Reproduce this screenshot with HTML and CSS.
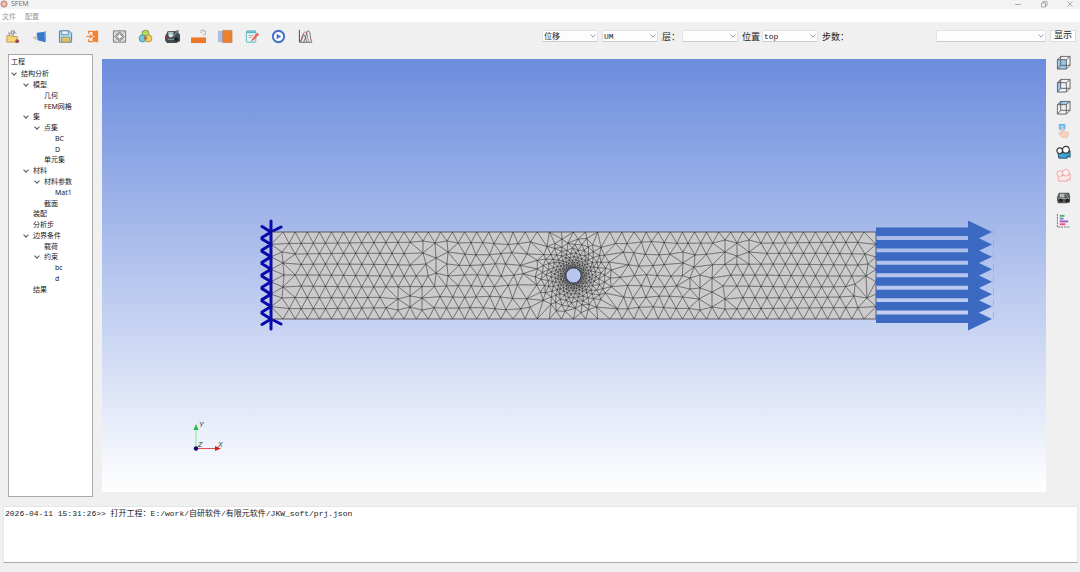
FILE: index.html
```html
<!DOCTYPE html>
<html lang="zh-CN">
<head>
<meta charset="UTF-8">
<title>SFEM</title>
<link rel="stylesheet" href="styles.css">
</head>
<body>
<header class="titlebar">
	<svg class="logo" viewBox="0 0 10 10"><circle cx="5" cy="5" r="4" fill="#f8c9ae" stroke="#9a86c8"/><path d="M2 4L5 2L8 4L7 8H3Z" fill="none" stroke="#ee7b4a"/></svg>
	<span class="apptitle">SFEM</span>
	<div class="winbuttons">
		<button aria-label="最小化"><svg viewBox="0 0 8 8"><path d="M1 4.500H7" stroke="#999" stroke-width=".8"/></svg></button>
		<button aria-label="还原"><svg viewBox="0 0 8 8"><path d="M1.500 3H5.500V7H1.500ZM3 3V1.500H7V5.500H5.500" fill="none" stroke="#999" stroke-width=".8"/></svg></button>
		<button aria-label="关闭"><svg viewBox="0 0 8 8"><path d="M1.500 1.500L6.500 6.500M6.500 1.500L1.500 6.500" stroke="#999" stroke-width=".8"/></svg></button>
	</div>
</header>
<nav class="menubar">
	<button>文件</button>
	<button>配置</button>
</nav>
<div class="toolbar">
	<div class="tools">
		<button aria-label="新建"><svg viewBox="0 0 16 16"><path d="M2 7H6L7 8H13V14H2Z" fill="#f8d477" stroke="#b88b3c" stroke-width=".8"/><path d="M5 7L4 4L7 5L7 2L10 2L9 7M7 7L10 3L12 5" fill="none" stroke="#858a9b"/><circle cx="13" cy="13" r="2" fill="#9b4650"/></svg></button>
		<button aria-label="打开"><svg viewBox="0 0 16 16"><path d="M5 4L14 3V14L6 12Z" fill="#3978cb"/><path d="M0 9L5 7V12Z" fill="#c9c3b6"/><path d="M13 3L15 2V13L14 14" fill="#75a4df"/></svg></button>
		<button aria-label="保存"><svg viewBox="0 0 16 16"><path d="M1.500 2H12L14.500 4.500V14H1.500Z" fill="#a9d7ef" stroke="#557e9f"/><path d="M4 2H11V6H4Z" fill="#e7f0f4" stroke="#557e9f" stroke-width=".8"/><path d="M4 9H12.500V14H4Z" fill="#f4d36c" stroke="#8b8550" stroke-width=".8"/><path d="M5 11H11M5 12.500H11" stroke="#b59a4c" stroke-width=".6"/></svg></button>
		<button aria-label="退出"><svg viewBox="0 0 16 16"><path d="M8 3L14 1.500V14.500L8 13Z" fill="#f08233"/><path d="M4 5V2.500H13M4 11V13.500H9M1 8H7M5 6L7 8L5 10" fill="none" stroke="#f08233" stroke-width="1.300"/><circle cx="9.500" cy="8" r=".7" fill="#fff"/></svg></button>
		<button aria-label="网格"><svg viewBox="0 0 16 16"><path d="M1.500 2H14.500V14H1.500Z" fill="#e5e5e5" stroke="#777"/><path d="M1.500 2L14.500 14M14.500 2L1.500 14" stroke="#999" stroke-width=".7"/><path d="M8 3L13 8L8 13L3 8Z" fill="#ddd" stroke="#666"/><path d="M8 5L11 8L8 11L5 8Z" fill="#fff" stroke="#666"/></svg></button>
		<button aria-label="材料"><svg viewBox="0 0 16 16"><circle cx="8" cy="5" r="3.800" fill="#b8da54" stroke="#799a48"/><circle cx="5" cy="10" r="3.800" fill="#69c5dc" fill-opacity=".9" stroke="#4994a8"/><circle cx="11" cy="10" r="3.800" fill="#f7c957" fill-opacity=".9" stroke="#b98f3b"/><path d="M8 7L10 10L8 12L6 10Z" fill="#a96b40"/></svg></button>
		<button aria-label="装配"><svg viewBox="0 0 16 16"><path d="M0 8L3 2H13L16 6V13L12 15H2L0 12Z" fill="#424c50"/><path d="M3 3H9V8H4Z" fill="#adbdc5"/><path d="M10 2L15 1L13 6" fill="#64757e"/><circle cx="6" cy="7" r="2" fill="#dae7e9"/><path d="M9 8L12 4M3 11H12" stroke="#80a5aa"/><path d="M0 9H2" stroke="#e02626" stroke-width="2"/><circle cx="12" cy="11" r="2" fill="#171f24"/></svg></button>
		<button aria-label="载荷"><svg viewBox="0 0 16 16"><path d="M0 9H16V15H0Z" fill="#ec792b"/><path d="M10 2L12 1L13 3M13 1L16 3L15 6L13 7M10 3L12 5" fill="none" stroke="#999" stroke-width=".8"/></svg></button>
		<button aria-label="边界"><svg viewBox="0 0 16 16"><path d="M0 2H6V14H0Z" fill="#a9bee7"/><path d="M5 1.500H15V14.500H5Z" fill="#eb802f" stroke="#bc7a4e" stroke-width=".6"/></svg></button>
		<button aria-label="编辑"><svg viewBox="0 0 16 16"><rect x="1.500" y="2" width="10" height="12" rx="1.500" fill="#e8f7f9" stroke="#6dc1cd" stroke-width="1.200"/><path d="M2 2.500H11V4.500H2Z" fill="#57b8c5"/><path d="M4 7H9M4 9H7" stroke="#e48c88"/><path d="M7 11.500L13 4L15 5.500L9 12L6.500 13Z" fill="#ee5a55"/></svg></button>
		<button aria-label="计算"><svg viewBox="0 0 16 16"><circle cx="8" cy="8" r="6" fill="#fff" stroke="#4674c8" stroke-width="2.200"/><path d="M6 5L11 8L6 11Z" fill="#4674c8"/></svg></button>
		<button aria-label="曲线"><svg viewBox="0 0 16 16"><path d="M1.500 1V14H15" fill="none" stroke="#444"/><path d="M3 13C6 10 5 3 8 3S9 11 12 13" fill="none" stroke="#ae5147" stroke-width=".8"/><path d="M6 13C9 11 8 2 11 2S12 11 15 13M2 13C5 11 4 5 6 6S8 10 9 13" fill="none" stroke="#444" stroke-width=".8"/></svg></button>
	</div>
	<div class="filters">
		<span class="combo"><select aria-label="结果类型"><option>位移</option></select><svg viewBox="0 0 6 4"><path d="M.5.5L3 3L5.500.5"/></svg></span>
		<span class="combo"><select aria-label="分量"><option>UM</option></select><svg viewBox="0 0 6 4"><path d="M.5.5L3 3L5.500.5"/></svg></span>
		<label class="layer" for="layer">层：</label>
		<span class="combo"><select id="layer"><option></option></select><svg viewBox="0 0 6 4"><path d="M.5.5L3 3L5.500.5"/></svg></span>
		<label class="place" for="place">位置</label>
		<span class="combo"><select id="place"><option>top</option></select><svg viewBox="0 0 6 4"><path d="M.5.5L3 3L5.500.5"/></svg></span>
		<label class="steps" for="steps">步数：</label>
		<span class="combo wide"><select id="steps"><option></option></select><svg viewBox="0 0 6 4"><path d="M.5.5L3 3L5.500.5"/></svg></span>
		<button class="show">显示</button>
	</div>
</div>
<main class="work">
	<aside class="project">
		<h1>工程</h1>
		<ul class="tree">
			<li class="open">结构分析</li>
			<li class="open l1">模型</li>
			<li class="l2">几何</li>
			<li class="l2">FEM网格</li>
			<li class="open l1">集</li>
			<li class="open l2">点集</li>
			<li class="l3">BC</li>
			<li class="l3">D</li>
			<li class="l2">单元集</li>
			<li class="open l1">材料</li>
			<li class="open l2">材料参数</li>
			<li class="l3">Mat1</li>
			<li class="l2">截面</li>
			<li class="l1">装配</li>
			<li class="l1">分析步</li>
			<li class="open l1">边界条件</li>
			<li class="l2">载荷</li>
			<li class="open l2">约束</li>
			<li class="l3">bc</li>
			<li class="l3">d</li>
			<li class="l1">结果</li>
		</ul>
	</aside>
	<section class="view">
		<svg class="scene" viewBox="102 59 944 433">
			<path id="supports" class="supports"/>
			<rect class="plate" x="271" y="232" width="605" height="87"/>
			<path id="mesh" class="mesh"/>
			<circle class="hole" cx="573.500" cy="275.500" r="7.500"/>
			<path class="axisline" d="M271 221V329"/>
			<g id="loads" class="loads"></g>
			<path d="M993.500 228V324" stroke="#8e9fd8" stroke-width=".6" stroke-dasharray="7 5"/>
			<path d="M196 448V428" stroke="#7bea8c"/>
			<path d="M193.500 430L196 424L198.500 430Z" fill="#27b84a"/>
			<path d="M196 448.500H216" stroke="#e25252"/>
			<path d="M215 446L221 448.500L215 451Z" fill="#d61f1f"/>
			<circle cx="196" cy="448.500" r="2.200" fill="#0b0b72"/>
			<text x="199" y="427">Y</text>
			<text x="198" y="447">Z</text>
			<text x="218" y="447">X</text>
		</svg>
	</section>
	<div class="views">
		<button aria-label="正视图"><svg viewBox="0 0 16 16"><path d="M1.500 5H11V15H1.500Z" fill="#9ac9ee"/><path class="cube" d="M1.500 5H11V15H1.500ZM1.500 5L5 1.500H15V11L11 15M11 5L15 1.500M5 1.500V11H15M5 11L1.500 15"/></svg></button>
		<button aria-label="侧视图"><svg viewBox="0 0 16 16"><path d="M1.500 5L5 1.500V11L1.500 15Z" fill="#9ac3ee"/><path class="cube" d="M1.500 5H11V15H1.500ZM1.500 5L5 1.500H15V11L11 15M11 5L15 1.500M5 1.500V11H15M5 11L1.500 15"/></svg></button>
		<button aria-label="俯视图"><svg viewBox="0 0 16 16"><path d="M1.500 5L5 1.500H15L11 5Z" fill="#9ac3ee"/><path class="cube" d="M1.500 5H11V15H1.500ZM1.500 5L5 1.500H15V11L11 15M11 5L15 1.500M5 1.500V11H15M5 11L1.500 15"/></svg></button>
		<button aria-label="拾取"><svg viewBox="0 0 16 16"><path d="M3 1H10V7H3Z" fill="#64b9ed"/><path d="M5 4H8" stroke="#fff"/><path d="M6 5Q7 4 8 5V9L13 10V13L11 16H7L3 11Q3 9 6 11Z" fill="#fbd6bd" stroke="#d9a99a" stroke-width=".7"/></svg></button>
		<button aria-label="显示全部"><svg viewBox="0 0 16 16"><path d="M2 8H12L15 6V13L12 12V14H3Z" fill="#3ba5d5" stroke="#254b5b"/><circle cx="4" cy="6" r="3" fill="#fff" stroke="#333" stroke-width="1.200"/><circle cx="10.500" cy="5" r="3.600" fill="#fff" stroke="#333" stroke-width="1.200"/></svg></button>
		<button aria-label="隐藏"><svg viewBox="0 0 16 16"><path d="M2 8H12L15 6V13L12 12V14H3Z" fill="#fbe9e9" stroke="#f2a3a6"/><circle cx="4" cy="6" r="3" fill="#fbeeee" stroke="#f2a3a6"/><circle cx="10.500" cy="5" r="3.600" fill="#fbeeee" stroke="#f2a3a6"/></svg></button>
		<button aria-label="部件"><svg viewBox="0 0 16 16"><path d="M1 8L3 3H14L15 7V13L12 14H2L1 11Z" fill="#555b5b"/><path d="M4 4H9V8H4Z" fill="#b8b8b8"/><path d="M2 9H14M10 4L13 8" stroke="#aaa"/><circle cx="5" cy="11" r="2" fill="#222"/><circle cx="12" cy="11" r="2" fill="#222"/></svg></button>
		<button aria-label="图例"><svg viewBox="0 0 16 16"><path d="M1.500 1V15H15" fill="none" stroke="#666" stroke-dasharray="2 1"/><path d="M4 3H9" stroke="#56ac69" stroke-width="2"/><path d="M4 6H8" stroke="#5c88cf" stroke-width="2"/><path d="M4 9H13" stroke="#a15bc2" stroke-width="2"/><path d="M4 12H10" stroke="#ef5379" stroke-width="2"/></svg></button>
	</div>
</main>
<footer class="log">2026-04-11 15:31:26&gt;&gt; 打开工程：E:/work/自研软件/有限元软件/JKW_soft/prj.json</footer>
<script src="mesh.js"></script>
</body>
</html>
```
FILE: styles.css
```css
* {
	margin:0;
	padding:0;
	box-sizing:border-box;
	}
body{
	display:flex;
	flex-direction:column;
	height:100vh;
	overflow:hidden;
	padding-bottom:9px;
	background-color:#f0f0f0;
	color:#222;
	font-family:"Noto Sans","Noto Sans CJK SC",sans-serif;
	font-size:7px;
	}
button{
	border:none;
	background:none;
	font:inherit;
	color:inherit;
	}
svg{
	display:block;
	}
.titlebar{
	display:flex;
	align-items:center;
	height:9px;
	padding-bottom:2px;
	background-color:#f3f3f3;
	color:#777;
	}
.logo{
	width:8px;
	height:8px;
	}
.apptitle{
	margin-left:3px;
	line-height:8px;
	}
.winbuttons{
	display:flex;
	gap:18px;
	margin-left:auto;
	padding-right:6px;
	}
.winbuttons svg{
	width:8px;
	height:8px;
	}
.menubar{
	display:flex;
	gap:9px;
	height:13px;
	padding-left:2px;
	background-color:#fff;
	color:#999;
	}
.toolbar{
	display:flex;
	justify-content:space-between;
	align-items:center;
	height:28px;
	padding:0 4px 0 5px;
	}
.tools{
	display:flex;
	justify-content:space-between;
	width:308px;
	}
.tools svg{
	width:15px;
	height:15px;
	}
.filters{
	display:flex;
	align-items:center;
	gap:4px;
	font-family:"Liberation Mono","Noto Sans CJK SC",monospace;
	font-size:9px;
	}
.combo{
	display:grid;
	align-items:center;
	width:56px;
	}
.combo.wide{
	width:110px;
	}
.combo select{
	grid-area:1/1;
	width:100%;
	height:12px;
	padding-left:1px;
	appearance:none;
	border:1px solid #e2e2e2;
	border-bottom-color:#ccc;
	border-radius:0;
	background-color:#fdfdfd;
	color:#222;
	font:8px "Liberation Mono","Noto Sans CJK SC",monospace;
	}
.combo svg{
	grid-area:1/1;
	justify-self:end;
	width:6px;
	height:4px;
	margin-right:2px;
	fill:none;
	stroke:#888;
	stroke-width:.8;
	pointer-events:none;
	}
.layer,.place{
	width:16px;
	white-space:nowrap;
	}
.steps{
	width:110px;
	}
.show{
	width:26px;
	height:12px;
	line-height:10px;
	border:1px solid #ddd;
	background-color:#fdfdfd;
	}
.work{
	display:flex;
	flex:1;
	min-height:0;
	padding:4px 0 9px 8px;
	}
.project{
	width:85px;
	border:1px solid #aaa;
	background-color:#fff;
	}
.project h1{
	padding-left:2px;
	font-size:7px;
	font-weight:normal;
	line-height:14px;
	}
.tree{
	display:grid;
	grid-auto-rows:1fr;
	align-items:center;
	height:226px;
	list-style:none;
	}
.tree li{
	display:flex;
	align-items:center;
	padding-left:12px;
	line-height:10px;
	}
.tree .l1{
	padding-left:24px;
	}
.tree .l2{
	padding-left:35px;
	}
.tree .l3{
	padding-left:46px;
	}
.tree .open::before{
	content:"";
	width:3px;
	height:3px;
	margin:0 5px 2px -9px;
	border-right:1px solid #555;
	border-bottom:1px solid #555;
	transform:rotate(45deg);
	}
.view{
	flex:1;
	min-width:0;
	margin:5px 0 5px 9px;
	background:linear-gradient(#6c8cdd,#fff);
	}
.scene{
	width:100%;
	height:100%;
	}
.scene text{
	font:italic 7px "Liberation Sans",sans-serif;
	fill:#333;
	}
.plate{
	fill:#cbcbcb;
	stroke:#555;
	stroke-width:.6;
	}
.mesh{
	fill:none;
	stroke:#222;
	stroke-width:.3;
	}
.hole{
	fill:#b7c6f0;
	stroke:#36455c;
	stroke-width:.8;
	}
.supports,.axisline{
	fill:none;
	stroke:#0a0aaa;
	stroke-width:3;
	stroke-linecap:round;
	}
.loads{
	fill:#3c69c1;
	}
.views{
	display:flex;
	flex-direction:column;
	justify-content:space-between;
	align-items:center;
	width:34px;
	height:174px;
	padding-top:1px;
	}
.views svg{
	width:15px;
	height:15px;
	}
.cube{
	fill:none;
	stroke:#555;
	stroke-width:.9;
	}
.log{
	height:57px;
	margin:0 2px 0 3px;
	padding:2px 1px;
	border:1px solid #e6e6e6;
	border-bottom-color:#aaa;
	background-color:#fff;
	font:8px/10px "Liberation Mono","Noto Sans CJK SC",monospace;
	}
```
FILE: mesh.js
```js
const X0=271,Y0=232,W=605,H=87,CX=573.5,CY=275.5,R=7.5;
const NX=50,NY=8,NS=7;
const dx=W/NX,dy=H/NY,ds=H/NS;

//irregular interior nodes
const nodes=[
	[282,252],[283,263],[284,275],[283,287],[282,298],
	[423,241],[435,243],[447,241],[423,253],[436,258],[448,252],[426,264],[436,273],[447,264],[448,276],
	[398,299],[398,310],[410,296],[410,307],[422,298],[422,310],
	[683,252],[683,263],[695,255],[694,267],[690,278],[690,289],[700,275],[700,288],[712,278],[712,292],
	[699,299],[712,307],[725,299],[700,310],[725,309],[723,286],
	[725,240],[725,252],[737,243],[737,256],[749,240],[749,252],
	[865,254],[868,264],[866,276],[855,284],[867,298],[854,296]
];
const pts=[];

function dist(ax,ay,bx,by){
	return Math.sqrt((ax-bx)**2+(ay-by)**2);
}

function makePoints(){
	//rings get coarser away from the hole
	let r=R,n=0;
	while(r<43){
		const h=1.7+(r-R)*0.21;
		const m=Math.round(2*Math.PI*r/h);
		for(let i=0;i<m;i++){
			const t=(i+n*0.37)*2*Math.PI/m;
			const q=n<2?r:r+h*0.2*Math.sin(i*2.7+n*1.9);
			const x=CX+q*Math.cos(t),y=CY+q*Math.sin(t);
			if(y>Y0+6&&y<Y0+H-6){pts.push([x,y]);}
		}
		r+=h*0.9;
		n++;
	}
	for(const p of nodes){pts.push(p);}
	for(let j=0;j<=NY;j++){
		for(let i=0;i<=NX;i++){
			let x=X0+(i+(j%2)*0.5)*dx,y=Y0+j*dy;
			const edge=j==0||j==NY;
			if(!edge){
				if(x<X0+15||x>X0+W-15){continue;}
				if(dist(x,y,CX,CY)<46){continue;}
				if(nodes.some(p=>dist(x,y,p[0],p[1])<8)){continue;}
				//the free mesher leaves the rows uneven near the middle
				const k=Math.exp(-(((x-CX)/90)**2));
				x+=2.5*k*Math.sin(i*2.3+j*1.7);
				y+=0.5*Math.sin(i*0.35+j)+2*k*Math.sin(i*1.3+j*2.1);
			}
			pts.push([x,y]);
		}
	}
	for(let j=1;j<NS;j++){
		pts.push([X0,Y0+j*ds]);
		pts.push([X0+W,Y0+j*ds]);
	}
}

function circum(a,b,c){
	const p=pts[a],q=pts[b],s=pts[c];
	const d=2*(p[0]*(q[1]-s[1])+q[0]*(s[1]-p[1])+s[0]*(p[1]-q[1]));
	const pp=p[0]**2+p[1]**2,qq=q[0]**2+q[1]**2,ss=s[0]**2+s[1]**2;
	const x=(pp*(q[1]-s[1])+qq*(s[1]-p[1])+ss*(p[1]-q[1]))/d;
	const y=(pp*(s[0]-q[0])+qq*(p[0]-s[0])+ss*(q[0]-p[0]))/d;
	return {v:[a,b,c],x:x,y:y,r:dist(x,y,p[0],p[1])};
}

//Bowyer-Watson
function triangulate(){
	const n=pts.length;
	//tiny shift keeps points off common circles
	for(let i=0;i<n;i++){
		pts[i]=[pts[i][0]+1e-4*Math.sin(i*7.1),pts[i][1]+1e-4*Math.cos(i*3.7)];
	}
	pts.push([-9000,-9000],[10000,-9000],[500,12000]);
	let tri=[circum(n,n+1,n+2)];
	for(let i=0;i<n;i++){
		const edges=new Map();
		const keep=[];
		for(const t of tri){
			if(dist(pts[i][0],pts[i][1],t.x,t.y)<t.r){
				for(let k=0;k<3;k++){
					const a=Math.min(t.v[k],t.v[(k+1)%3]),b=Math.max(t.v[k],t.v[(k+1)%3]);
					const key=a+','+b;
					if(edges.has(key)){edges.delete(key);}
					else{edges.set(key,[a,b]);}
				}
			} else{
				keep.push(t);
			}
		}
		for(const e of edges.values()){keep.push(circum(e[0],e[1],i));}
		tri=keep;
	}
	return tri.filter(t=>t.v.every(k=>k<n));
}

function drawMesh(){
	makePoints();
	let d='';
	for(const t of triangulate()){
		const p=t.v.map(k=>Math.min(pts[k][0],X0+W).toFixed(1)+' '+pts[k][1].toFixed(1));
		d+='M'+p[0]+'L'+p[1]+'L'+p[2]+'Z';
	}
	document.getElementById('mesh').setAttribute('d',d);
}

function drawLoads(){
	let s='',a='';
	for(let j=0;j<=NS;j++){
		const y=Y0+j*ds;
		s+='M262 '+(y-5.5)+'L271 '+y+'L262 '+(y+5.5);
		a+='<path d="M876 '+(y-4.5)+'H968V'+(y-11.5)+'L992 '+y+'L968 '+(y+11.5)+'V'+(y+4)+'H876Z"/>';
	}
	s+='M281 '+(Y0-5)+'L271 '+Y0+'M281 '+(Y0+H+5)+'L271 '+(Y0+H);
	document.getElementById('supports').setAttribute('d',s);
	document.getElementById('loads').innerHTML=a;
}

drawMesh();
drawLoads();
```
